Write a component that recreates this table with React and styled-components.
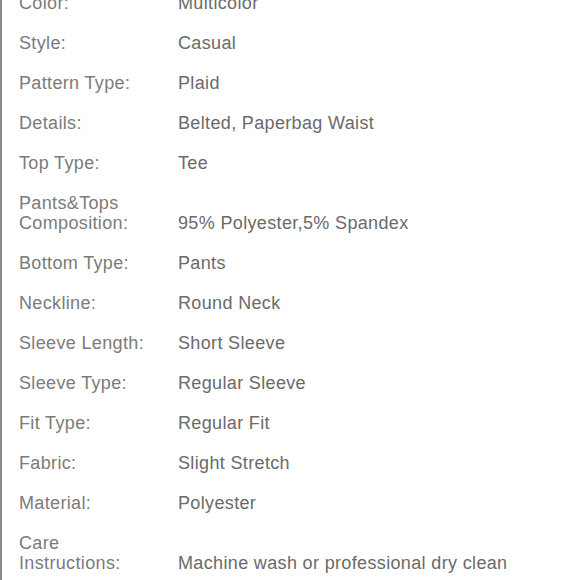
import React from "react";
import styled, { createGlobalStyle } from "styled-components";

const GlobalStyle = createGlobalStyle`
  html, body {
    margin: 0;
    padding: 0;
    background: #ffffff;
    overflow: hidden;
  }
`;

const specs = [
  ["Color:", "Multicolor"],
  ["Style:", "Casual"],
  ["Pattern Type:", "Plaid"],
  ["Details:", "Belted, Paperbag Waist"],
  ["Top Type:", "Tee"],
  ["Pants&Tops Composition:", "95% Polyester,5% Spandex", ["Pants&Tops", "Composition:"]],
  ["Bottom Type:", "Pants"],
  ["Neckline:", "Round Neck"],
  ["Sleeve Length:", "Short Sleeve"],
  ["Sleeve Type:", "Regular Sleeve"],
  ["Fit Type:", "Regular Fit"],
  ["Fabric:", "Slight Stretch"],
  ["Material:", "Polyester"],
  ["Care Instructions:", "Machine wash or professional dry clean", ["Care", "Instructions:"]],
];

const Page = styled.div`
  width: 580px;
  height: 580px;
  overflow: hidden;
  border-left: 2px solid #8a8a8a;
  box-sizing: border-box;
`;

const List = styled.dl`
  margin: -7px 0 0 0;
  padding: 0 0 0 17px;
  display: flex;
  flex-direction: column;
  gap: 20px;
  font-family: "Liberation Sans", Arial, sans-serif;
  font-size: 18px;
  letter-spacing: 0.35px;
  line-height: 20px;
`;

const Row = styled.div`
  display: flex;
  align-items: flex-end;
`;

const Label = styled.dt`
  width: 159px;
  flex-shrink: 0;
  color: #7b7b7b;
`;

const Value = styled.dd`
  margin: 0;
  color: #6a6a6a;
  white-space: nowrap;
`;

export default function App() {
  return (
    <>
      <GlobalStyle />
      <Page>
        <List>
          {specs.map(([label, value, lines]) => (
            <Row key={label}>
              <Label>
                {lines
                  ? lines.map((l, i) => <div key={i}>{l}</div>)
                  : label}
              </Label>
              <Value>{value}</Value>
            </Row>
          ))}
        </List>
      </Page>
    </>
  );
}
